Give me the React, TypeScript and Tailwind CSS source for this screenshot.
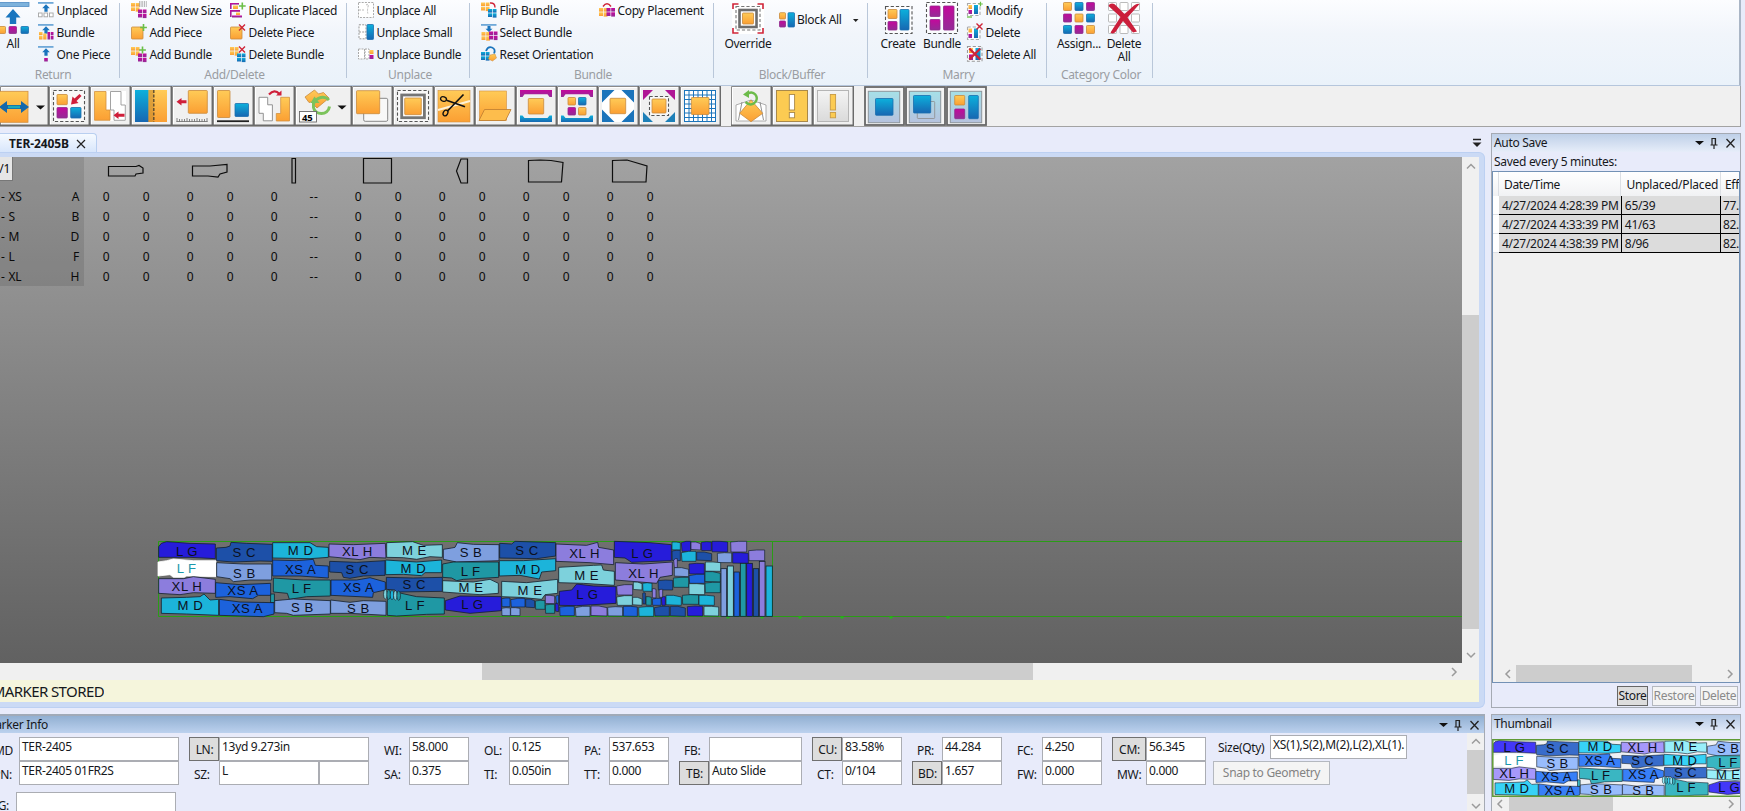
import React from "react";

type P = { children?: React.ReactNode };
const FONT = "font-['Noto_Sans','Open_Sans',sans-serif]";

/* ---------- icon primitives ---------- */
const Defs = () => (
  <svg width="0" height="0" className="absolute">
    <defs>
      <linearGradient id="go" x1="0" y1="0" x2="0" y2="1"><stop offset="0" stopColor="#ffcb57" /><stop offset="1" stopColor="#fb9f33" /></linearGradient>
      <linearGradient id="gu" x1="0" y1="0" x2="0" y2="1"><stop offset="0" stopColor="#0cb0dc" /><stop offset="1" stopColor="#1767b2" /></linearGradient>
      <linearGradient id="gm" x1="0" y1="0" x2="0" y2="1"><stop offset="0" stopColor="#c4089c" /><stop offset="1" stopColor="#932c96" /></linearGradient>
      <linearGradient id="gs" x1="0" y1="0" x2="0" y2="1"><stop offset="0" stopColor="#a6e0e8" /><stop offset="1" stopColor="#b6c2de" /></linearGradient>
      <linearGradient id="gy" x1="0" y1="0" x2="0" y2="1"><stop offset="0" stopColor="#f4f4f4" /><stop offset="1" stopColor="#dadada" /></linearGradient>
    </defs>
  </svg>
);
const fills: Record<string, string> = { o: "url(#go)", u: "url(#gu)", m: "url(#gm)", w: "#ffffff", n: "none" };
const strokes: Record<string, string> = { o: "#c98a3c", u: "#1a6fae", m: "#8f2a8c", w: "#a9a9a9", n: "#8c8c8c" };
/* rows of [fill, x, y, x2, y2] */
type Q = [string, number, number, number, number];
const Sq = ({ r, line = true }: { r: Q[]; line?: boolean }) => (
  <>
    {r.map(([f, x, y, x2, y2], i) => (
      <rect key={i} x={x} y={y} width={x2 - x} height={y2 - y} rx={line ? 0.8 : 0} fill={fills[f]} stroke={line || f === "w" || f === "n" ? strokes[f] : "none"} strokeWidth="0.8" />
    ))}
  </>
);
const Dash = ({ x, y, x2, y2, c = "#555" }: { x: number; y: number; x2: number; y2: number; c?: string }) => (
  <rect x={x} y={y} width={x2 - x} height={y2 - y} fill="#fff" fillOpacity="0.6" stroke={c} strokeWidth="1.1" strokeDasharray="3.2 2" />
);
const Mini = ({ children }: P) => <svg width="16" height="16" viewBox="0 0 16 16" className="block shrink-0 overflow-visible">{children}</svg>;
const Up = ({ y = 0 }) => (
  <>
    <rect x="0" y={y} width="15.5" height="1.8" fill="#6fa8d8" />
    <path d={`M8 ${y + 2.2}l3.8 4H9.6v3.6H6.4V${y + 6.2}H4.2z`} fill="#1a74bd" />
  </>
);
const Plus = ({ x = 12.5, y = 3.5, s = 3.4, w = 1.6 }) => <path d={`M${x - s} ${y}H${x + s}M${x} ${y - s}V${y + s}`} stroke="#6abf47" strokeWidth={w} fill="none" />;
const Cross = ({ x = 12, y = 3.5, s = 3, w = 1.4 }) => <path d={`M${x - s} ${y - s}L${x + s} ${y + s}M${x + s} ${y - s}L${x - s} ${y + s}`} stroke="#cf2438" strokeWidth={w} fill="none" />;
const Cluster = ({ x, y, f }: { x: number; y: number; f: string }) => (
  <Sq line={false} r={[[f, x, y, x + 4, y + 3.6], [f, x + 4.7, y, x + 8.5, y + 3.6], [f, x, y + 4.3, x + 4, y + 8], [f, x + 4.7, y + 4.3, x + 8.5, y + 8.6]]} />
);

const icons = {
  unplaced: <Mini><Up /><g fill="#fff" stroke="#a5a5a5" strokeWidth=".9"><rect x=".5" y="11" width="3.6" height="3.8" /><rect x="6" y="11" width="3.6" height="3.8" /><rect x="11.5" y="11" width="3.6" height="3.8" /></g></Mini>,
  bundleUp: <Mini><Up /><Sq line={false} r={[["o", 1, 8, 4.500, 11], ["o", 1, 11.700, 4.500, 15.500], ["o", 5.200, 9.500, 8.500, 15.500], ["m", 9.500, 8, 12, 15.500], ["m", 12.700, 8, 15.500, 11], ["m", 12.700, 11.700, 15.500, 15.500]]} /></Mini>,
  onePiece: <Mini><Up /><Sq r={[["m", 6.2, 12, 9.8, 15.5]]} line={false} /></Mini>,
  addSize: <Mini><Cluster x={0} y={1} f="o" /><path d="M8 0h8M8 2h8M8 4h8" stroke="#777" strokeDasharray="1.4 1" /><Cluster x={7} y={7.5} f="m" /></Mini>,
  addPiece: <Mini><Sq r={[["o", 0.5, 3, 12, 15]]} /><Plus /></Mini>,
  addBundle: <Mini><Cluster x={0} y={1} f="o" /><Cluster x={7} y={7.5} f="m" /><Plus x={11.5} y={4} /></Mini>,
  dup: <Mini><Sq line={false} r={[["m", 0, 1, 9, 2.6], ["m", 0, 1, 1.600, 7], ["o", 3, 3.5, 8, 7], ["m", 0, 8, 10, 9.8], ["o", 6, 10.500, 10, 13], ["m", 2, 13.500, 12, 15.500], ["m", 0, 8, 1.6, 15]]} /><Plus x={12.3} y={4} /></Mini>,
  delPiece: <Mini><Sq r={[["o", 0.5, 3, 12, 15]]} /><Cross /></Mini>,
  delBundle: <Mini><Cluster x={0} y={1} f="o" /><Cluster x={7} y={7.5} f="u" /><Cross /></Mini>,
  unAll: <Mini><rect x=".5" y=".5" width="15" height="15" fill="#fff" stroke="#aaa" strokeDasharray="2 1.2" /><path d="M1 8h6M8 3q3-2 2 2t0 7" fill="none" stroke="#bbb" strokeDasharray="2 1" /></Mini>,
  unSmall: <Mini><rect x="1" y=".8" width="7" height="14" fill="#fff" stroke="#999" strokeDasharray="2 1.2" /><path d="M1 8h7" stroke="#999" strokeDasharray="2 1.2" /><Sq r={[["u", 9, 0.5, 15.5, 15.5]]} /></Mini>,
  unBundle: <Mini><g fill="#fff" stroke="#aaa" strokeDasharray="2 1"><rect x=".5" y="3" width="6" height="10" /><rect x="7" y="3" width="4" height="10" /></g><Sq line={false} r={[["o", 11.5, 4, 15.5, 8], ["m", 11.5, 9, 15.5, 13]]} /></Mini>,
  flip: <Mini><Cluster x={0} y={0.5} f="o" /><Cluster x={7} y={7} f="u" /><path d="M9 1q5-.5 5 4.5" stroke="#cf2438" strokeWidth="1.4" fill="none" /></Mini>,
  select: <Mini><rect width="15.5" height="1.8" fill="#6fa8d8" /><path d="M8 8L4.5 4.8h2V2h3v2.8h2z" fill="#1a74bd" /><Cluster x={0.5} y={8} f="o" /><Cluster x={8} y={7.5} f="m" /></Mini>,
  reset: <Mini><Cluster x={0} y={6} f="u" /><path d="M5 5q2-5 6-3.500t2 6" stroke="#1a74bd" strokeWidth="1.8" fill="none" /><path d="M9 9l5-1 1.500 4-4 3-4-2z" fill="url(#go)" stroke="#c98a3c" strokeWidth=".5" /></Mini>,
  copy: <Mini><Cluster x={0} y={6} f="o" /><Cluster x={7.5} y={6} f="m" /><path d="M4 4.500q4-5.500 8 0" stroke="#cf2438" strokeWidth="1.4" fill="none" /></Mini>,
  blockAll: <Mini><Sq r={[["o", 0.5, 0.7, 6.5, 7], ["m", 0.5, 9, 6.500, 15], ["u", 9, 0.7, 15.5, 15]]} /></Mini>,
  modify: <Mini><Dash x={0.5} y={1.500} x2={13} y2={13.500} c="#aaa" /><Sq line={false} r={[["o", 1.5, 3, 5, 7], ["m", 1.500, 8, 5, 12], ["u", 7, 3, 11, 12]]} /><Plus x={13.5} y={2} s={2.3} w={1.2} /><path d="M0 15h5" stroke="#6abf47" strokeWidth="1.300" /></Mini>,
  del: <Mini><Dash x={0.5} y={3} x2={13} y2={15.500} c="#aaa" /><Sq line={false} r={[["o", 1.5, 4.500, 5, 8.500], ["m", 1.500, 10, 5, 14], ["u", 7, 4.500, 11, 14]]} /><Cross x={12.500} y={2.500} /></Mini>,
  delAll: <Mini><Dash x={0.5} y={0.500} x2={15} y2={15.300} c="#999" /><Sq line={false} r={[["o", 2, 2, 6, 7], ["m", 2, 8.500, 6, 14], ["u", 8.500, 2, 13.500, 14]]} /><Cross x={7.800} y={8} s={5.500} w={2.300} /></Mini>,
};

/* ---------- ribbon ---------- */
type It = [keyof typeof icons, string];
const Col = ({ items, cls }: { items: It[]; cls: string }) => (
  <div className={`flex flex-col -mt-px ${cls}`}>
    {items.map(([ic, t]) => (
      <div key={t} className="flex h-[22px] items-center gap-[2.500px] whitespace-nowrap">{icons[ic]}<span className="pt-px">{t}</span></div>
    ))}
  </div>
);
const Group = ({ w, label, lab = "pl-[2px]", children }: P & { w: string; label: string; lab?: string }) => (
  <div className={`relative flex h-[85px] shrink-0 flex-col ${w}`}>
    <div className="flex h-[66px]">{children}</div>
    <div className={`flex h-[18px] items-center justify-center text-[#9a9da2] ${lab}`}>{label}</div>
    <div className="absolute right-0 top-[3px] h-[75px] w-px bg-[#b9c7d9]" />
  </div>
);
const Big = ({ cls, icon, lines }: { cls: string; icon: React.ReactNode; lines: string[] }) => (
  <div className={`flex shrink-0 flex-col items-center ${cls}`}>
    <div className="h-[37px]">{icon}</div>
    {lines.map((l) => <div key={l} className="h-[13px] whitespace-nowrap leading-[14px]">{l}</div>)}
  </div>
);
const Svg = ({ w, h = 37, children }: P & { w: number; h?: number }) => <svg width={w} height={h} viewBox={`0 0 ${w} ${h}`} className="block overflow-visible">{children}</svg>;

const Ribbon = () => (
  <div className="flex h-[86px] w-[1741px] border-b border-r-2 border-b-[#b5c6dc] border-r-[#aab6c6] bg-linear-to-b from-[#fcfdff] via-[#f1f5fb] via-40% to-[#eaf2fa]">
    <Group w="w-[120px]" label="Return" lab="pr-[14px]">
      <Big cls="w-[26px]" lines={["All"]} icon={
        <div className="w-[26px]"><Svg w={29}>
          <rect x="-2" y="2.500" width="31" height="4" fill="#7db2dc" stroke="#4f8cc4" strokeWidth=".8" />
          <path d="M13 9l7.500 8.500h-4.300V24h-6.400v-6.500H5.500z" fill="#1a76bf" />
          <Sq r={[["o", -2, 26.500, 5.500, 33.500], ["m", 9, 26.500, 16.500, 33.500], ["u", 21, 26.500, 28.500, 33.500]]} />
        </Svg></div>} />
      <Col cls="ml-[12px]" items={[["unplaced", "Unplaced"], ["bundleUp", "Bundle"], ["onePiece", "One Piece"]]} />
    </Group>
    <Group w="w-[227px]" label="Add/Delete">
      <Col cls="ml-[11px] w-[99px]" items={[["addSize", "Add New Size"], ["addPiece", "Add Piece"], ["addBundle", "Add Bundle"]]} />
      <Col cls="" items={[["dup", "Duplicate Placed"], ["delPiece", "Delete Piece"], ["delBundle", "Delete Bundle"]]} />
    </Group>
    <Group w="w-[123px]" label="Unplace" lab="pl-[3px]">
      <Col cls="ml-[11px]" items={[["unAll", "Unplace All"], ["unSmall", "Unplace Small"], ["unBundle", "Unplace Bundle"]]} />
    </Group>
    <Group w="w-[244px]" label="Bundle">
      <Col cls="ml-[11px] w-[118px]" items={[["flip", "Flip Bundle"], ["select", "Select Bundle"], ["reset", "Reset Orientation"]]} />
      <Col cls="" items={[["copy", "Copy Placement"]]} />
    </Group>
    <Group w="w-[154px]" label="Block/Buffer">
      <Big cls="ml-[11px] w-[46px]" lines={["Override"]} icon={
        <Svg w={32}>
          <rect y="3" width="32" height="31" fill="#fff" />
          <Dash x={4} y={6.500} x2={28} y2={30} c="#777" />
          <rect x="7.500" y="10" width="17" height="17" fill="#fff" stroke="#6c6c6c" strokeWidth="2.600" />
          <Sq r={[["o", 10.500, 13, 21.500, 24]]} />
          <path d="M1 9V4h5.500M25.500 4H31v5M31 28v5h-5.500M6.500 33H1v-5" fill="none" stroke="#cf2438" strokeWidth="1.600" />
        </Svg>} />
      <div className="ml-[8px] flex h-[40px] items-center gap-[2px] whitespace-nowrap">{icons.blockAll}<span>Block All</span>
        <svg width="6" height="3" viewBox="0 0 6 3" className="ml-[9px]"><path d="M0 0h5.500L2.700 3z" fill="#222" /></svg>
      </div>
    </Group>
    <Group w="w-[179px]" label="Marry">
      <Big cls="ml-[10px] w-[40px]" lines={["Create"]} icon={
        <Svg w={29}><Dash x={1.500} y={6.500} x2={28} y2={33.500} /><Sq r={[["o", 4, 9.500, 13, 18.500], ["m", 4, 21.500, 13, 30], ["u", 16, 9.500, 25, 30]]} /></Svg>} />
      <Big cls="w-[48px]" lines={["Bundle"]} icon={
        <Svg w={32}><Dash x={0.500} y={2.500} x2={31.500} y2={33.500} /><Sq r={[["m", 4, 6, 14, 16.500], ["m", 4, 19.500, 14, 30], ["m", 17.500, 6, 28, 30]]} /></Svg>} />
      <Col cls="ml-px" items={[["modify", "Modify"], ["del", "Delete"], ["delAll", "Delete All"]]} />
    </Group>
    <Group w="w-[106px]" label="Category Color">
      <Big cls="ml-[9px] w-[46px]" lines={["Assign..."]} icon={
        <Svg w={32}><Sq r={[["o", 0.500, 2.500, 8.500, 10.500], ["u", 12, 2.500, 20, 10.500], ["m", 23.500, 2.500, 31.500, 10.500], ["m", 0.500, 14, 8.500, 22], ["o", 12, 14, 20, 22], ["u", 23.500, 14, 31.500, 22], ["u", 0.500, 25.500, 8.500, 33.500], ["m", 12, 25.500, 20, 33.500], ["o", 23.500, 25.500, 31.500, 33.500]]} /></Svg>} />
      <Big cls="-ml-px w-[46px]" lines={["Delete", "All"]} icon={
        <Svg w={32}>
          <Sq r={[0, 1, 2].flatMap((a) => [0, 1, 2].map((b): Q => ["w", 0.500 + a * 11.500, 2.500 + b * 11.500, 8.500 + a * 11.500, 10.500 + b * 11.500]))} />
          <path d="M.5 6C2 2.500 6 3 8 5.500L16.500 14 26 5.500q3-2.500 5.500-1.500L19.500 17.500 29 31.500l-4 1L15 21 7.500 32q-2.500 2.500-5 .5L12.500 17z" fill="#cb1f3b" />
        </Svg>} />
    </Group>
  </div>
);

/* ---------- tool strip ---------- */
const Btn = ({ children, on = false, w = 41 }: P & { on?: boolean; w?: number }) => (
  <svg width={w} height="40" viewBox={`0 0 ${w} 40`} className="block shrink-0">
    <rect width={w} height="40" fill="#f0f0f0" />
    {on ? <rect x="1" y="1" width={w - 2} height="38" fill="#f4f4f4" stroke="#686868" strokeWidth="1.800" />
      : <><path d={`M.5 40V.5H${w}`} stroke="#8a8a8a" fill="none" strokeWidth="1" /><path d={`M1.500 39V1.500H${w - 2}`} stroke="#fff" fill="none" /><path d={`M0 39.300H${w - 0.700}V0`} stroke="#6a6a6a" fill="none" strokeWidth="1.500" /></>}
    {children}
  </svg>
);
const RedLeft = ({ x, y, l = 10 }: { x: number; y: number; l?: number }) => <path d={`M${x} ${y}l5-3.800v2.300h${l - 5}v3h-${l - 5}v2.300z`} fill="#cf1f3a" />;
const Bars = () => (
  <>
    <path d="M4 4h32v7h-2.500l-2-2.700H8.500l-2 2.700H4z" fill="url(#gm)" />
    <path d="M4 36h32v-6.500h-2.500l-2 2.500H8.500l-2-2.500H4z" fill="url(#gu)" />
  </>
);
const Drop = ({ x }: { x: number }) => <path d={`M${x} 19.500h9l-4.500 4z`} fill="#111" />;
const Plate = () => <rect x="4.300" y="5.300" width="31.400" height="31.400" fill="url(#gs)" stroke="#8c959c" />;

const Strip = () => (
  <div className="flex h-[41px] w-[1741px] border-b border-r border-[#a3a3a3] bg-[#f0f0f0]">
    <Btn w={49}>
      <rect x="-4" y="5.300" width="32" height="31" fill="url(#go)" stroke="#d29040" strokeWidth=".8" />
      <path d="M-1 21l8-6v4h14v-4l8 6-8 6v-4H7v4z" fill="#1568ab" /><path d="M8 21h12" stroke="#1fa9b8" strokeWidth="2.500" />
      <Drop x={36} />
    </Btn>
    <Btn><Dash x={4.500} y={4.500} x2={35.500} y2={35.500} /><Sq r={[["o", 8, 8.500, 18.300, 18.700], ["m", 8, 21.500, 18.300, 32], ["u", 21.700, 21.500, 32, 32]]} /><path d="M22 18.500l1.500-8 2 2 5-4.500 2 2-5 5 2 2z" fill="#cf1f3a" /></Btn>
    <Btn><rect x="4" y="5" width="32" height="30" fill="#fff" /><path d="M4.500 5.500h11.500v18.500h4v10.300H4.500z" fill="url(#go)" stroke="#d29040" strokeWidth=".8" /><path d="M20.500 5.500H31V19h4.300v15.300H24V24h-3.500z" fill="#fff" stroke="#999" strokeWidth=".9" /><RedLeft x={23.500} y={29.300} l={11} /></Btn>
    <Btn><rect x="4" y="4" width="19" height="32" fill="url(#gu)" /><rect x="17.500" y="4" width="18.500" height="32" fill="url(#go)" /><rect x="17.500" y="4" width="5" height="32" fill="#c58a2e" opacity=".55" /><path d="M22.800 4v32" stroke="#5a4a30" strokeWidth="1.400" strokeDasharray="3 1.500" /></Btn>
    <Btn><Sq r={[["o", 16.300, 4.500, 35.300, 27.300]]} /><RedLeft x={4.500} y={15.700} /><path d="M5 32v4M7.500 33v3M10 33v3M12.500 33v3M15 32v4M17.500 33v3M20 33v3M22.500 33v3M25 32v4M27.500 33v3M30 33v3M32.500 33v3M35 32v4M4.500 35.500h31" stroke="#777" strokeWidth=".9" /></Btn>
    <Btn><Sq r={[["o", 4.500, 4.500, 17, 31.500], ["u", 22, 17.500, 35.500, 30.500]]} /><path d="M4 35.200h32" stroke="#222" strokeWidth="1.800" /></Btn>
    <Btn><path d="M5 11.300h8.700v7.500h4.700v16H9.300v-7.500H5z" fill="#fff" stroke="#888" strokeWidth=".9" /><path d="M26.700 11.300h8.800V35H22.300v-7.500h4.400z" fill="url(#go)" stroke="#d29040" strokeWidth=".8" /><path d="M15 8.500q5.500-6 10.500-.5" stroke="#cf1f3a" strokeWidth="2.200" fill="none" /><path d="M27.500 4.500V9.500H22z" fill="#cf1f3a" /></Btn>
    <Btn w={57}><path d="M10 11l9.500-7 4 4 5-1.500 5.500 5.500-12 10-6-6-2 .5z" fill="url(#go)" stroke="#c98a3c" strokeWidth=".8" /><path d="M34 14c-6-6-17-1-15.500 7.500C20 29.500 33 30 34.500 20.500" stroke="#7cc35c" strokeWidth="3" fill="none" /><path d="M15.500 17h9l-5-6.500z" fill="#7cc35c" /><rect x="4.500" y="25.500" width="17" height="10.500" fill="#fff" stroke="#666" strokeWidth=".9" /><text x="7" y="34.500" fontSize="9.500" fontWeight="700" fontFamily="Noto Sans">45</text><Drop x={42.500} /></Btn>
    <Btn><rect x="11.700" y="12.300" width="24" height="23" rx="1.500" fill="#fff" fillOpacity=".5" stroke="#888" /><Sq r={[["o", 4.500, 4.700, 27.700, 27.700]]} /></Btn>
    <Btn><Dash x={4.500} y={4.500} x2={35.500} y2={35.500} /><rect x="8.700" y="9" width="22.700" height="22.700" fill="#fff" stroke="#757575" strokeWidth="2.800" /><Sq r={[["o", 11.700, 12, 28.300, 28.700]]} /></Btn>
    <Btn><rect x="4" y="4.500" width="32" height="31.500" fill="url(#go)" stroke="#d29040" strokeWidth=".6" /><path d="M4 24L36 15" stroke="#fff3d8" strokeWidth="2" /><g fill="none" stroke="#111" strokeWidth="1.300"><ellipse cx="9.500" cy="13" rx="3" ry="2.200" transform="rotate(20 9.500 13)" /><ellipse cx="11.500" cy="27" rx="2.200" ry="3" transform="rotate(30 11.500 27)" /><path d="M12.500 14.300l18.500 6.500M13.500 25L29.500 8.500" strokeWidth="1.700" /></g></Btn>
    <Btn><rect x="4.500" y="5" width="27" height="29.500" fill="url(#go)" stroke="#d29040" strokeWidth=".6" /><path d="M4 34.500l5.500-11H36l-5.500 11z" fill="#fdbd4c" stroke="#bd7c30" strokeWidth=".8" /></Btn>
    <Btn><Bars /><Sq r={[["o", 12.300, 12.500, 27.700, 28]]} /></Btn>
    <Btn><Bars /><Sq r={[["o", 11, 11.500, 18.500, 19], ["u", 21.500, 11.500, 29, 19], ["m", 11, 21.500, 18.500, 29], ["o", 21.500, 21.500, 29, 29]]} /></Btn>
    <Btn><rect x="4" y="4" width="32" height="32" fill="#fff" /><path d="M4 4h12.500L4 16.500zM36 4v12.500L23.500 4zM4 36V23.500L16.500 36zM36 36H23.500L36 23.500z" fill="#1b74bb" /><Sq r={[["o", 12, 12.300, 27.700, 27.700]]} /></Btn>
    <Btn><path d="M4 4h10L4 14zM36 4v10L26 4z" fill="#b01595" /><path d="M4 36V26l10 10zM36 36H26l10-10z" fill="#1e80b8" /><Dash x={10.500} y={10.500} x2={29.500} y2={29.500} /><Sq r={[["o", 13, 13, 27, 27]]} /></Btn>
    <Btn><rect x="4" y="4" width="32" height="32" fill="#fff" /><path d="M4.500 4v32M9 4v32M13.500 4v32M18 4v32M22.500 4v32M27 4v32M31.500 4v32M35.500 4v32M4 4.500h32M4 9h32M4 13.500h32M4 18h32M4 22.500h32M4 27h32M4 31.500h32M4 35.500h32" stroke="#1b74bb" strokeWidth="1" /><Sq r={[["o", 11.300, 11.500, 29, 28.500]]} /></Btn>
    <div className="w-[10px]" />
    <Btn><path d="M5 19l15-5 15 5v16H5z" fill="#fff" stroke="#999" strokeWidth=".8" /><path d="M11 16l-3.500 18M29 16l3.500 18" stroke="#888" strokeWidth=".9" /><path d="M8.700 27.300L20 14l11.700 13.300L20 35.700z" fill="url(#go)" stroke="#c98a3c" strokeWidth=".8" /><path d="M17 7.500C23 4 28 11 24.500 16q-4.500 5-10 0" stroke="#6cbb4a" strokeWidth="2.400" fill="none" /><path d="M12 8.500l6-4.500v8z" fill="#6cbb4a" /></Btn>
    <Btn><rect x="4.500" y="4.500" width="31" height="31" fill="#fccb52" stroke="#a9894a" /><rect x="17.300" y="8.500" width="5.300" height="15.500" fill="#fff" stroke="#a9894a" strokeWidth=".9" /><rect x="17.300" y="26.500" width="5.300" height="5.300" fill="#fff" stroke="#a9894a" strokeWidth=".9" /></Btn>
    <Btn><rect x="4.500" y="4.500" width="31" height="31" fill="url(#gy)" stroke="#b5b5b5" /><rect x="17.300" y="8.500" width="5.300" height="15.500" fill="#fccb52" stroke="#c79b45" strokeWidth=".9" /><rect x="17.300" y="26.500" width="5.300" height="5.300" fill="#fccb52" stroke="#c79b45" strokeWidth=".9" /></Btn>
    <div className="w-[10px]" />
    <Btn on><Plate /><Sq r={[["u", 11.500, 12.500, 29, 29.300]]} /></Btn>
    <Btn on><Plate /><Sq r={[["n", 12.300, 15.500, 29.700, 32.500], ["u", 8.500, 9.500, 25.700, 27]]} /></Btn>
    <Btn on><Plate /><Sq r={[["o", 8.700, 9.500, 18.700, 19], ["m", 8.700, 23, 18.700, 32.700], ["u", 22.700, 9.500, 32.300, 32.700]]} /></Btn>
  </div>
);

/* ---------- marker drawing ---------- */
const dark: Record<string, string> = { n: "#261cda", d: "#1d50a8", c: "#1cb4da", v: "#8c7ddd", e: "#7dd1dc", l: "#7e9fdf", b: "#1c62dc", t: "#1f98a4", w: "#ffffff" };
const light: Record<string, string> = { n: "#4338f8", d: "#386ccb", c: "#37d2f6", v: "#a698fb", e: "#98eefa", l: "#98bcfc", b: "#387ff8", t: "#3ab6c2", w: "#ffffff" };
const pieces: [string, string, string, number, number][] = [
  ["n", "L G", "26,50 34,40 50,35 120,40 196,42 196,86 120,82 26,82", 111, 79],
  ["d", "S C", "199,54 228,52 240,48 243,37 290,40 367,43 367,94 330,93 250,96 199,92", 283, 81],
  ["c", "M D", "368,38 480,38 500,50 535,52 535,82 480,86 368,84", 452, 75],
  ["v", "XL H", "537,42 610,44 706,40 708,84 660,82 630,89 537,80", 622, 78],
  ["e", "M E", "710,38 788,35 820,46 877,44 877,82 840,80 800,88 760,83 710,82", 793, 75],
  ["l", "S B", "880,58 905,54 915,52 922,38 970,43 1047,44 1047,92 920,96 880,88", 963, 80],
  ["d", "S C", "1049,40 1085,42 1095,34 1217,38 1217,78 1160,86 1049,84", 1131, 75],
  ["v", "XL H", "1218,42 1310,46 1343,37 1346,52 1391,60 1391,104 1320,98 1218,94", 1304, 84],
  ["n", "L G", "1393,34 1500,38 1564,44 1564,92 1445,97 1425,84 1393,82", 1477, 83],
  ["w", "L F", "24,96 50,92 70,87 130,92 198,92 198,140 110,138 104,142 70,142 60,134 24,138", 110, 128],
  ["l", "S B", "200,98 280,102 365,102 365,150 300,150 250,155 240,146 200,140", 283, 143],
  ["b", "XS A", "368,90 440,92 490,88 496,106 535,108 535,144 450,138 368,138", 452, 131],
  ["d", "S C", "539,94 620,97 705,92 705,136 640,138 600,145 580,142 575,128 539,126", 622, 131],
  ["c", "M D", "707,90 800,96 875,90 875,128 825,128 815,137 760,133 707,134", 790, 128],
  ["t", "L F", "878,102 910,96 1046,96 1046,142 940,148 920,152 905,144 878,142", 962, 137],
  ["c", "M D", "1048,92 1120,92 1217,86 1217,122 1175,126 1168,147 1110,136 1048,138", 1134, 131],
  ["e", "M E", "1226,112 1330,106 1355,105 1360,120 1393,124 1393,166 1300,160 1226,158", 1310, 149],
  ["v", "XL H", "1396,98 1480,102 1567,96 1567,136 1530,142 1520,160 1396,150", 1481, 143],
  ["v", "XL H", "26,146 100,146 130,140 196,148 196,190 130,188 90,194 26,190", 111, 183],
  ["b", "XS A", "197,158 270,164 362,160 362,196 325,196 308,206 240,200 197,202", 279, 194],
  ["t", "L F", "370,144 460,150 541,150 541,198 470,200 418,208 412,190 370,186", 455, 188],
  ["b", "XS A", "543,150 620,150 660,143 706,156 706,180 670,188 668,202 543,196", 626, 186],
  ["d", "S C", "709,142 790,144 877,142 877,184 740,186 735,180 709,178", 793, 177],
  ["e", "M E", "878,152 970,156 1020,148 1045,160 1045,190 990,194 878,186", 963, 185],
  ["e", "M E", "1055,154 1130,158 1223,148 1223,190 1185,194 1175,208 1110,202 1055,200", 1140, 194],
  ["n", "L G", "1228,184 1265,180 1280,162 1330,168 1398,170 1398,220 1280,227 1228,226", 1312, 206],
  ["c", "M D", "34,204 110,202 150,200 162,192 180,210 206,208 206,256 110,252 34,250", 121, 240],
  ["b", "XS A", "208,208 270,216 372,218 372,252 340,260 208,256", 292, 249],
  ["l", "S B", "374,212 430,207 541,212 541,252 430,256 410,250 374,248", 457, 245],
  ["l", "S B", "542,210 600,217 640,212 708,214 708,256 600,250 542,250", 625, 248],
  ["t", "L F", "712,204 735,200 745,188 800,200 883,204 883,252 830,253 740,258 712,256", 795, 239],
  ["n", "L G", "886,212 930,198 1054,200 1054,242 960,250 886,240", 967, 236],
];
const bits: Q[] = [
  ["c", 636, 36, 661, 60], ["d", 636, 61, 661, 92], ["n", 664, 34, 692, 64], ["v", 693, 36, 722, 60], ["n", 724, 35, 754, 62], ["n", 756, 34, 803, 66], ["v", 812, 34, 860, 66],
  ["c", 664, 64, 708, 94], ["d", 710, 66, 755, 92], ["l", 772, 68, 815, 98], ["n", 818, 68, 865, 100], ["v", 866, 60, 914, 92],
  ["v", 641, 86, 652, 113], ["l", 643, 113, 686, 140], ["n", 687, 100, 733, 132], ["e", 736, 96, 782, 124], ["t", 640, 142, 686, 172], ["b", 687, 133, 734, 160], ["t", 735, 125, 781, 156], ["d", 594, 150, 638, 180], ["e", 687, 161, 734, 194], ["t", 735, 157, 781, 188],
  ["v", 470, 164, 518, 195], ["e", 520, 156, 546, 180], ["c", 548, 158, 576, 184], ["v", 577, 176, 588, 204], ["v", 597, 178, 608, 202],
  ["e", 470, 197, 517, 226], ["e", 518, 202, 546, 226], ["d", 548, 188, 556, 222], ["t", 558, 200, 574, 226], ["b", 577, 205, 603, 226], ["n", 604, 200, 616, 226], ["c", 618, 196, 664, 226], ["t", 667, 194, 716, 223], ["c", 717, 196, 763, 226],
  ["b", 299, 229, 343, 257], ["l", 346, 229, 390, 259], ["v", 393, 228, 441, 258], ["l", 443, 230, 488, 258], ["b", 490, 229, 532, 259], ["c", 536, 230, 581, 259], ["d", 583, 229, 628, 258], ["d", 631, 229, 676, 259], ["n", 682, 228, 728, 258], ["e", 732, 229, 776, 258],
  ["b", 125, 204, 150, 230], ["b", 152, 205, 195, 231], ["d", 197, 207, 224, 233], ["t", 226, 211, 255, 238], ["v", 256, 196, 284, 221], ["t", 256, 223, 284, 250], ["b", 287, 196, 296, 220], ["n", 286, 220, 296, 245], ["l", 125, 233, 151, 257], ["l", 152, 233, 180, 257],
];
const strips: Q[] = [["l", 783, 116, 800, 259], ["e", 802, 108, 820, 259], ["b", 822, 126, 838, 259], ["t", 841, 100, 858, 259], ["n", 860, 100, 877, 259], ["d", 880, 116, 896, 259], ["v", 898, 94, 915, 259], ["c", 918, 108, 937, 259], ["t", -568, 192, -557, 218]];
const Marker = ({ k, pal, ts }: { k: number; pal: Record<string, string>; ts: number }) => (
  <g transform={`scale(${k / 3})`} stroke="#14202c" strokeWidth={2.400}>
    <g transform="translate(930 0)">
      {bits.map(([f, x, y, x2, y2], i) => {
        const a = [0, 2, 4, 0, 2][i % 5], b = [2, 0, 0, 5, 1][i % 5];
        return <path key={i} d={`M${x} ${y + a}L${(x + x2) / 2} ${y}L${x2} ${y + b}V${y2}L${x + a / 2} ${y2 - b / 3}Z`} fill={pal[f]} strokeWidth={2} />;
      })}
      {strips.map(([f, x, y, x2, y2], i) => <rect key={i} x={x} y={y} width={x2 - x} height={y2 - y} fill={pal[f]} />)}
    </g>
    {pieces.map(([f, , pts], i) => <polygon key={i} points={pts} fill={pal[f]} stroke={f === "w" ? "#fff" : undefined} />)}
    {[0, 1, 2, 3, 4].map((i) => <ellipse key={i} cx={706 + i * 10} cy={193 + i} rx="5.500" ry="14" fill={pal["etcet"[i]]} strokeWidth="2" />)}
    {pieces.map(([f, t, , x, y], i) => (
      <text key={`t${i}`} x={x} y={y + (ts > 1 ? 3 : 0)} textAnchor="middle" fontFamily="Liberation Sans" fontSize={39.500 * ts} stroke="none" letterSpacing={1.500} fill={f === "w" ? "#1c98ac" : "#0c1020"}>{t}</text>
    ))}
  </g>
);

/* ---------- shared chrome ---------- */
const Chev = ({ d, cls = "" }: { d: "u" | "d" | "l" | "r"; cls?: string }) => {
  const p = { u: "M1 6.500L5 2.500l4 4", d: "M1 3L5 7l4-4", l: "M7 1L3 5l4 4", r: "M3 1l4 4-4 4" }[d];
  return <svg width="10" height="10" viewBox="0 0 10 10" className={`block shrink-0 ${cls}`}><path d={p} fill="none" stroke="#9b9b9b" strokeWidth="1.500" /></svg>;
};
const PanelTools = () => (
  <svg width="45" height="16" viewBox="0 0 45 16" className="block">
    <path d="M0 6h9l-4.500 4z" fill="#111" />
    <path d="M15.500 10h7M17 10V3.500h3.500V10M20.300 3.500V10M19 10v4" fill="none" stroke="#222" strokeWidth="1.200" />
    <path d="M31.500 4l8 8.500M39.500 4l-8 8.500" stroke="#222" strokeWidth="1.300" />
  </svg>
);
const Title = ({ t, cls }: { t: string; cls: string }) => (
  <div className={`flex h-[18px] shrink-0 items-center justify-between ${cls}`}><span>{t}</span><PanelTools /></div>
);

/* ---------- canvas ---------- */
const shapes = [
  "22.500,9.500 50,9.500 53,8.500 57,11 57,16 50,17 49,19 22.500,19",
  "22.500,9 40,9 57,7.500 57,15 50,17 48,20 38,19 22.500,19",
  "38,1.500 41.500,1.500 41.500,26 38,26",
  "25.500,1.500 53.500,1.500 53.500,26 25.500,26",
  "39,2 45.500,2 45.500,26 39,26 34.500,14",
  "22.500,3.500 34,3 45,3.500 57,5.500 55.500,25 22.500,25",
  "22.500,3.500 37,3 57,9 56,25 22.500,25",
];
const sizes = [["XS", "A"], ["S", "B"], ["M", "D"], ["L", "F"], ["XL", "H"]];
const Canvas = () => (
  <div className="relative h-[506px] w-[1462px] overflow-hidden bg-linear-to-b from-[#a2a2a2] to-[#616161] text-[#0a0a0a]">
    <div className="flex h-[130px]">
      <div className="h-[129px] w-[84px] bg-black/10">
        <div className="flex h-[30px]"><div className="flex h-[24px] w-[13px] items-center justify-end overflow-hidden border-b border-r border-[#777] bg-[#e6e6e6] pr-[2px]">/1</div></div>
        {sizes.map(([s, g]) => (
          <div key={g} className="flex h-[20px] items-center"><span className="w-[8.500px] pl-px">-</span><span className="flex-1">{s}</span><span className="w-[15px] pr-[5px] text-right">{g}</span></div>
        ))}
      </div>
      <div className="ml-[2px] flex gap-[4px]">
        {shapes.map((s, i) => (
          <div key={i} className="w-[80px]">
            <svg width="80" height="30" viewBox="0 0 80 30" className="block"><polygon points={s} fill="none" stroke="#0d0d0d" strokeWidth="1.200" /></svg>
            {sizes.map(([g]) => (
              <div key={g} className="flex h-[20px] items-center text-center"><span className="w-1/2">0</span><span className={i === 2 ? "w-1/2 tracking-[0.700px]" : "w-1/2"}>{i === 2 ? "--" : "0"}</span></div>
            ))}
          </div>
        ))}
      </div>
    </div>
    <svg width="1462" height="376" viewBox="0 287 1462 376" className="block">
      <g fill="none" stroke="#2a9c16" strokeWidth="1"><path d="M1462 541.500H158.500V616.500H1462M772.500 541.500V616.500" /></g>
      {[728, 762, 800, 842, 891, 948].map((x) => <rect key={x} x={x - 1.500} y="616.500" width="3" height="2" fill="#25b81a" />)}
      <g transform="translate(150 530)"><Marker k={1} pal={dark} ts={1} /></g>
    </svg>
  </div>
);
const Document = () => (
  <div className="flex w-[1485px] flex-col">
    <div className="flex h-[25px] items-end justify-between">
      <div className="flex h-[19px] w-[97px] items-center rounded-tr-sm border-r border-t border-[#b9cff0] bg-linear-to-b from-[#f6faff] to-[#d8e6fb] pl-[9px] pt-px font-bold">
        <span className="tracking-[-0.100px]">TER-2405B</span>
        <svg width="10" height="10" viewBox="0 0 10 10" className="ml-[7px]"><path d="M1 1l8 8M9 1L1 9" stroke="#222" strokeWidth="1.200" /></svg>
      </div>
      <svg width="10" height="10" viewBox="0 0 10 10" className="mb-[4px] mr-[3px]"><path d="M1 1.500h8" stroke="#222" strokeWidth="1.500" /><path d="M.5 4.500h9L5 9z" fill="#222" /></svg>
    </div>
    <div className="flex h-[556px] flex-col rounded-r-md border-y border-r border-[#bcd0f2] bg-[#cbdaf5] pb-[5px] pr-[5px] pt-[4px]">
      <div className="flex">
        <Canvas />
        <div className="flex h-[506px] w-[17px] flex-col items-center bg-[#f0f0f0] pt-[5px]">
          <Chev d="u" /><div className="mt-[143px] h-[314px] w-full bg-[#cdcdcd]" /><Chev d="d" cls="mt-[21px]" />
        </div>
      </div>
      <div className="flex h-[17px] items-center bg-[#f0f0f0]"><div className="ml-[482px] h-full w-[551px] bg-[#cdcdcd]" /><Chev d="r" cls="ml-[416px]" /></div>
      <div className="flex h-[22px] bg-[#f5f5dc]"><div className="flex w-[104px] items-center justify-end overflow-hidden whitespace-nowrap text-[15px] tracking-[-0.600px]">MARKER STORED</div></div>
    </div>
  </div>
);

/* ---------- marker info ---------- */
const Field = ({ v, cls }: { v: string; cls: string }) => <div className={`h-[24px] shrink-0 overflow-hidden whitespace-nowrap border border-[#abadb3] bg-white pl-[2px] leading-[18px] ${cls}`}>{v}</div>;
const Lab = ({ t, b, wide }: { t: string; b: boolean; wide?: boolean }) => (
  <div className={`flex h-[24px] shrink-0 justify-end ${wide ? "w-[44px]" : "w-[40px]"}`}>
    {b ? <div className={`flex items-center border border-[#707070] bg-[#dddddd] ${wide ? "w-[34px]" : "w-[30px]"} justify-center pl-px pt-[2px]`}>{t}</div>
      : <div className={`flex items-center pt-[3px] ${wide ? "w-[29px]" : "w-[25px]"}`}>{t}</div>}
  </div>
);
type B = [string, string, boolean, string, string, boolean, string];
const blocks: B[] = [
  ["WI:", "58.000", false, "SA:", "0.375", false, "w-[60px]"],
  ["OL:", "0.125", false, "TI:", "0.050in", false, "w-[60px]"],
  ["PA:", "537.653", false, "TT:", "0.000", false, "w-[60px]"],
  ["FB:", "", false, "TB:", "Auto Slide", true, "w-[93px]"],
  ["CU:", "83.58%", true, "CT:", "0/104", false, "w-[60px]"],
  ["PR:", "44.284", false, "BD:", "1.657", true, "w-[60px]"],
  ["FC:", "4.250", false, "FW:", "0.000", false, "w-[60px]"],
  ["CM:", "56.345", true, "MW:", "0.000", false, "w-[60px]"],
];
const Clip = ({ t, cls }: { t: string; cls: string }) => <div className={`flex h-[24px] items-center justify-end overflow-hidden whitespace-nowrap pt-[3px] ${cls}`}>{t}</div>;
const Info = () => (
  <div className="mt-[6px] flex h-[97px] w-[1485px] flex-col overflow-hidden border-r border-t-2 border-r-[#a5aab3] border-t-[#a0aab8]">
    <div className="flex h-[17px] shrink-0 items-center justify-between bg-linear-to-b from-[#92b0d2] to-[#bcd1ee]"><div className="flex w-[48px] justify-end overflow-hidden whitespace-nowrap">Marker Info</div><PanelTools /></div>
    <div className="flex">
      <div className="flex w-[1467px] flex-col pt-[4px]">
        <div className="flex">
          <div className="w-[19px]"><Clip t="MD" cls="w-[13px]" /><Clip t="PN:" cls="w-[12px]" /></div>
          <div><Field v="TER-2405" cls="w-[160px]" /><Field v="TER-2405 01FR2S" cls="w-[160px]" /></div>
          <div><Lab t="LN:" b /><Lab t="SZ:" b={false} /></div>
          <div><Field v="13yd 9.273in" cls="w-[150px]" /><div className="flex"><Field v="L" cls="w-[100px]" /><Field v="" cls="w-[50px]" /></div></div>
          {blocks.map(([l1, v1, b1, l2, v2, b2, w]) => (
            <div key={l1} className="flex">
              <div><Lab t={l1} b={b1} wide={l1 === "CM:"} /><Lab t={l2} b={b2} wide={l1 === "CM:"} /></div>
              <div><Field v={v1} cls={w} /><Field v={v2} cls={w} /></div>
            </div>
          ))}
          <div className="-mt-[2px] ml-[7px]">
            <div className="flex h-[26px]"><div className="flex w-[57px] items-center whitespace-nowrap pl-[5px]">Size(Qty)</div><Field v="XS(1),S(2),M(2),L(2),XL(1)." cls="w-[137px] tracking-[-0.220px]" /></div>
            <div className="flex h-[24px] w-[117px] items-center justify-center whitespace-nowrap border border-[#b4b8bf] bg-[#f4f4f4] text-[#838383]">Snap to Geometry</div>
          </div>
        </div>
        <div className="mt-[7px] flex"><Clip t="TG:" cls="w-[9px]" /><Field v="" cls="ml-[7px] w-[160px]" /></div>
      </div>
      <div className="flex h-[79px] w-[17px] flex-col items-center bg-[#f0f0f0] pt-[4px]"><Chev d="u" /><div className="mt-[3px] h-[44px] w-full bg-[#cdcdcd]" /><Chev d="d" cls="mt-[7px]" /></div>
    </div>
  </div>
);

/* ---------- right side ---------- */
const saves = [["4/27/2024 4:28:39 PM", "65/39", "77."], ["4/27/2024 4:33:39 PM", "41/63", "82."], ["4/27/2024 4:38:39 PM", "8/96", "82."]];
const Side = () => (
  <div className="ml-[6px] flex w-[250px] flex-col pt-[6px]">
    <div className="flex h-[575px] flex-col border border-[#a5aab3]">
      <Title t="Auto Save" cls="bg-linear-to-b from-[#bfd0e8] to-[#e6edf9] pl-[2px]" />
      <div className="h-[19px] pl-[2px] leading-[20px]">Saved every 5 minutes:</div>
      <div className="flex h-[512px] shrink-0 flex-col overflow-hidden border border-[#7391b5] bg-[#f0f0f0]">
        <div className="flex h-[24px] shrink-0 items-center bg-linear-to-b from-white to-[#f1f2f4]">
          <div className="h-full w-[6px] border-r border-[#dcdfe4]" />
          <div className="flex h-full w-[123px] items-center border-r border-[#dcdfe4] pl-[5px] pt-[2px]">Date/Time</div>
          <div className="flex h-full w-[100px] items-center whitespace-nowrap border-r border-[#dcdfe4] pl-[5px] pt-[2px] tracking-[-0.200px]">Unplaced/Placed</div>
          <div className="pl-[4px] pt-[2px]">Eff</div>
        </div>
        {saves.map(([a, b, c]) => (
          <div key={a} className="flex h-[19px] shrink-0 whitespace-nowrap leading-[20px]">
            <div className="w-[6px] border-b border-[#dcdfe4] bg-white" />
            <div className="w-[124px] border-b border-r border-black bg-[#dcdcdc] pl-[3px] tracking-[-0.270px]">{a}</div>
            <div className="w-[100px] border-b border-r border-black bg-[#dcdcdc] pl-[3px]">{b}</div>
            <div className="flex-1 border-b border-black bg-[#dcdcdc] pl-[2px]">{c}</div>
          </div>
        ))}
        <div className="mt-auto flex h-[17px] items-center"><Chev d="l" cls="ml-[10px]" /><div className="ml-[3px] h-full w-[176px] bg-[#cdcdcd]" /><Chev d="r" cls="ml-[33px]" /></div>
      </div>
      <div className="flex items-center justify-end gap-[4px] pr-[2px] pt-[2.500px]">
        <div className="flex h-[20px] w-[31px] items-center justify-center border border-[#666] bg-[#dddddd] pt-px">Store</div>
        <div className="flex h-[20px] w-[44px] items-center justify-center border border-[#b4b8bf] bg-[#f4f4f4] pt-px text-[#8a8a8a]">Restore</div>
        <div className="flex h-[20px] w-[38px] items-center justify-center border border-[#b4b8bf] bg-[#f4f4f4] pt-px text-[#8a8a8a]">Delete</div>
      </div>
    </div>
    <div className="mt-[6px] flex h-[97px] flex-col overflow-hidden border border-b-0 border-[#a5aab3]">
      <Title t="Thumbnail" cls="bg-linear-to-b from-[#b4c8e4] to-[#e6edf9] pl-[2px]" />
      <svg width="248" height="58" viewBox="0 0 248 58" className="mt-[6px] block shrink-0">
        <rect width="248" height="58" fill="#eef0f4" />
        <g transform="translate(-5.500 -7.300)"><Marker k={0.753} pal={light} ts={1.320} /></g>
        <path d="M248 .8H.8v56.400H248" fill="none" stroke="#5f9a35" strokeWidth="1.500" />
      </svg>
      <div className="flex h-[17px] items-center bg-[#f0f0f0]"><Chev d="l" cls="ml-[3px]" /><div className="ml-[4px] h-full w-[104px] bg-[#cdcdcd]" /><Chev d="r" cls="ml-[113px]" /></div>
    </div>
  </div>
);

export default function App() {
  return (
    <div className={`h-[811px] w-[1745px] overflow-hidden bg-[#e8ebfa] text-[12px] leading-[16px] tracking-[-0.300px] text-[#16181c] ${FONT}`}>
      <Defs />
      <Ribbon />
      <Strip />
      <div className="flex">
        <div><Document /><Info /></div>
        <Side />
      </div>
    </div>
  );
}
